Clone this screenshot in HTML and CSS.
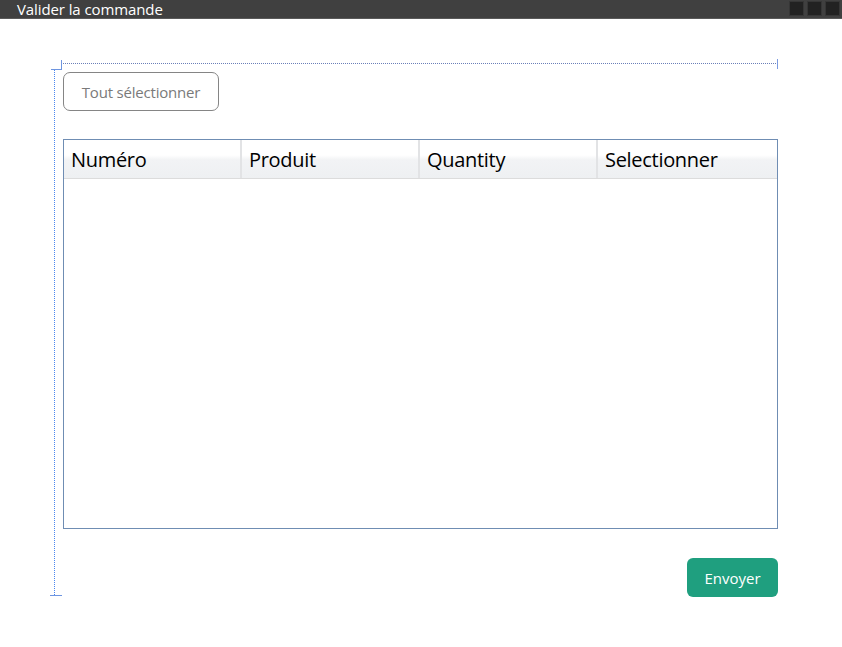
FILE: index.html
```html
<!DOCTYPE html>
<html lang="fr">
<head>
<meta charset="utf-8">
<title>Valider la commande</title>
<link rel="stylesheet" href="styles.css">
</head>
<body>
<div class="titlebar">
  <span class="title">Valider la commande</span>
  <div class="winbtns">
    <span class="wb"></span><span class="wb"></span><span class="wb"></span>
  </div>
</div>
<div class="canvas">
  <div class="guide-top"></div>
  <div class="guide-tick"></div>
  <div class="guide-corner-h"></div>
  <div class="guide-corner-v"></div>
  <div class="guide-left"></div>
  <div class="guide-bottom"></div>

  <div class="panel">
    <button class="btn-outline">Tout sélectionner</button>
    <div class="grid">
      <div class="grid-head">
        <div class="col">Numéro</div>
        <div class="col">Produit</div>
        <div class="col">Quantity</div>
        <div class="col last">Selectionner</div>
      </div>
      <div class="grid-body"></div>
    </div>
    <div class="actions">
      <button class="btn-primary">Envoyer</button>
    </div>
  </div>
</div>
</body>
</html>
```
FILE: styles.css
```css
* { box-sizing: border-box; }
html, body { margin: 0; padding: 0; background: #ffffff; }
body {
  width: 842px;
  height: 647px;
  overflow: hidden;
  font-family: "Open Sans", "Noto Sans", sans-serif;
}
.titlebar {
  height: 19px;
  background: #404040;
  border-bottom: 1px solid #5a5a5a;
  display: flex;
  align-items: center;
  justify-content: space-between;
}
.title {
  color: #ffffff;
  font-size: 15px;
  padding-left: 17px;
  line-height: 18px;
  letter-spacing: -0.1px;
}
.winbtns {
  display: flex;
  gap: 3px;
  padding-right: 2px;
  align-self: flex-start;
  padding-top: 1px;
}
.wb {
  width: 15px;
  height: 15px;
  background: #222222;
  border: 1px solid #363636;
}
.canvas {
  position: relative;
  height: 628px;
}
.guide-top {
  position: absolute;
  left: 63px; top: 44px;
  width: 714px; height: 1px;
  background: repeating-linear-gradient(90deg, #6a7fb8 0 1px, transparent 1px 2px);
}
.guide-tick {
  position: absolute;
  left: 777px; top: 40px;
  width: 1px; height: 10px;
  background: #7b9be0;
}
.guide-corner-h {
  position: absolute;
  left: 51px; top: 50px;
  width: 11px; height: 1px;
  background: #6e95e0;
}
.guide-corner-v {
  position: absolute;
  left: 61px; top: 41px;
  width: 1px; height: 10px;
  background: #6e95e0;
}
.guide-left {
  position: absolute;
  left: 54px; top: 51px;
  width: 1px; height: 526px;
  background: repeating-linear-gradient(180deg, #4a86f0 0 1px, transparent 1px 2px);
}
.guide-bottom {
  position: absolute;
  left: 50px; top: 576px;
  width: 12px; height: 1px;
  background: #6e95e0;
}
.panel {
  margin-left: 63px;
  width: 715px;
  padding-top: 53px;
  display: flex;
  flex-direction: column;
}
.btn-outline {
  align-self: flex-start;
  width: 156px;
  height: 39px;
  border: 1px solid #858585;
  border-radius: 7px;
  background: #ffffff;
  color: #7a7a7a;
  font-family: "Open Sans", "Noto Sans", sans-serif;
  font-size: 15px;
  letter-spacing: -0.2px;
  padding: 0;
}
.grid {
  margin-top: 28px;
  height: 390px;
  border: 1px solid #6f8db3;
  display: flex;
  flex-direction: column;
}
.grid-head {
  display: flex;
  height: 39px;
  border-bottom: 1px solid #dcdcdc;
  background: linear-gradient(#ffffff 0%, #ffffff 40%, #f2f3f5 52%, #eef0f2 100%);
}
.col {
  width: 178px;
  padding-left: 7px;
  padding-top: 1px;
  font-size: 20px;
  color: #000000;
  line-height: 38px;
  border-right: 2px solid #e2e3e5;
  letter-spacing: -0.3px;
}
.col.last { border-right: none; flex: 1; }
.grid-body { flex: 1; }
.actions {
  display: flex;
  justify-content: flex-end;
  margin-top: 29px;
}
.btn-primary {
  width: 91px;
  height: 39px;
  border: none;
  border-radius: 6px;
  background: #1f9f7f;
  color: #ffffff;
  font-family: "Open Sans", "Noto Sans", sans-serif;
  font-size: 15px;
  padding: 0;
}
```
